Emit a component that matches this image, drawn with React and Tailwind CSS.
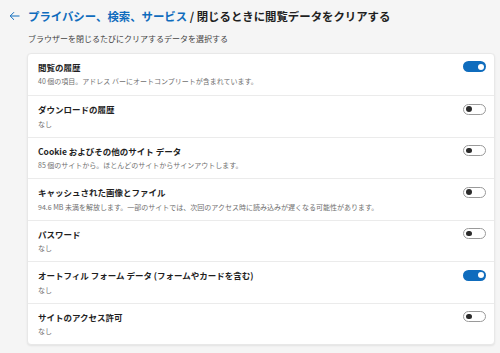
const rows = [
  { title: "閲覧の履歴", desc: "40 個の項目。アドレス バーにオートコンプリートが含まれています。", on: true },
  { title: "ダウンロードの履歴", desc: "なし", on: false },
  { title: "Cookie およびその他のサイト データ", desc: "85 個のサイトから。ほとんどのサイトからサインアウトします。", on: false },
  { title: "キャッシュされた画像とファイル", desc: "94.6 MB 未満を解放します。一部のサイトでは、次回のアクセス時に読み込みが遅くなる可能性があります。", on: false },
  { title: "パスワード", desc: "なし", on: false },
  { title: "オートフィル フォーム データ (フォームやカードを含む)", desc: "なし", on: true },
  { title: "サイトのアクセス許可", desc: "なし", on: false },
];

function Toggle({ on }) {
  if (on) {
    return (
      <div className="w-[23px] h-[11px] rounded-full bg-[#0f6cbd] flex items-center justify-end pr-[2.5px] shrink-0">
        <div className="w-[6px] h-[6px] rounded-full bg-white"></div>
      </div>
    );
  }
  return (
    <div className="w-[23px] h-[11px] rounded-full bg-white border border-[#9a9a9a] flex items-center pl-[2px] shrink-0">
      <div className="w-[5.5px] h-[5.5px] rounded-full bg-[#2b2b2b]"></div>
    </div>
  );
}

export default function App() {
  return (
    <div
      className="w-[500px] h-[353px] bg-[#f5f5f5] overflow-hidden"
      style={{ fontFamily: '"Noto Sans CJK JP", "Noto Sans", sans-serif' }}
    >
      <div className="flex items-center pl-[9px] pt-[8px] h-[24px]">
        <svg width="11" height="10" viewBox="0 0 11 10" className="mr-[8px]">
          <path d="M10.5 5H1.2M5 1.2L1.2 5L5 8.8" stroke="#0f6cbd" strokeWidth="1" fill="none" />
        </svg>
        <div className="text-[11.4px] leading-[16px] font-bold text-[#1f1f1f] whitespace-nowrap">
          <span className="text-[#0f6cbd]">プライバシー、検索、サービス</span> / 閉じるときに閲覧データをクリアする
        </div>
      </div>
      <div className="pl-[28px] mt-[9px] text-[8px] leading-[12px] text-[#444]">
        ブラウザーを閉じるたびにクリアするデータを選択する
      </div>
      <div className="ml-[27px] mr-[5px] mt-[7.5px] bg-white rounded-[4px] border border-[#e8e8e8] shadow-[0_1px_2px_rgba(0,0,0,0.08)]">
        {rows.map((r, i) => (
          <div
            key={i}
            className={"h-[41.5px] flex items-start justify-between pl-[10px] pr-[8px] pt-[8px] " + (i > 0 ? "border-t border-[#ebebeb]" : "")}
          >
            <div>
              <div className="text-[8.5px] leading-[10px] font-bold text-[#1f1f1f] whitespace-nowrap">{r.title}</div>
              <div className="mt-[5.5px] text-[7px] leading-[9px] text-[#707070] whitespace-nowrap">{r.desc}</div>
            </div>
            <div className="mt-[-0.5px]">
              <Toggle on={r.on} />
            </div>
          </div>
        ))}
      </div>
    </div>
  );
}
